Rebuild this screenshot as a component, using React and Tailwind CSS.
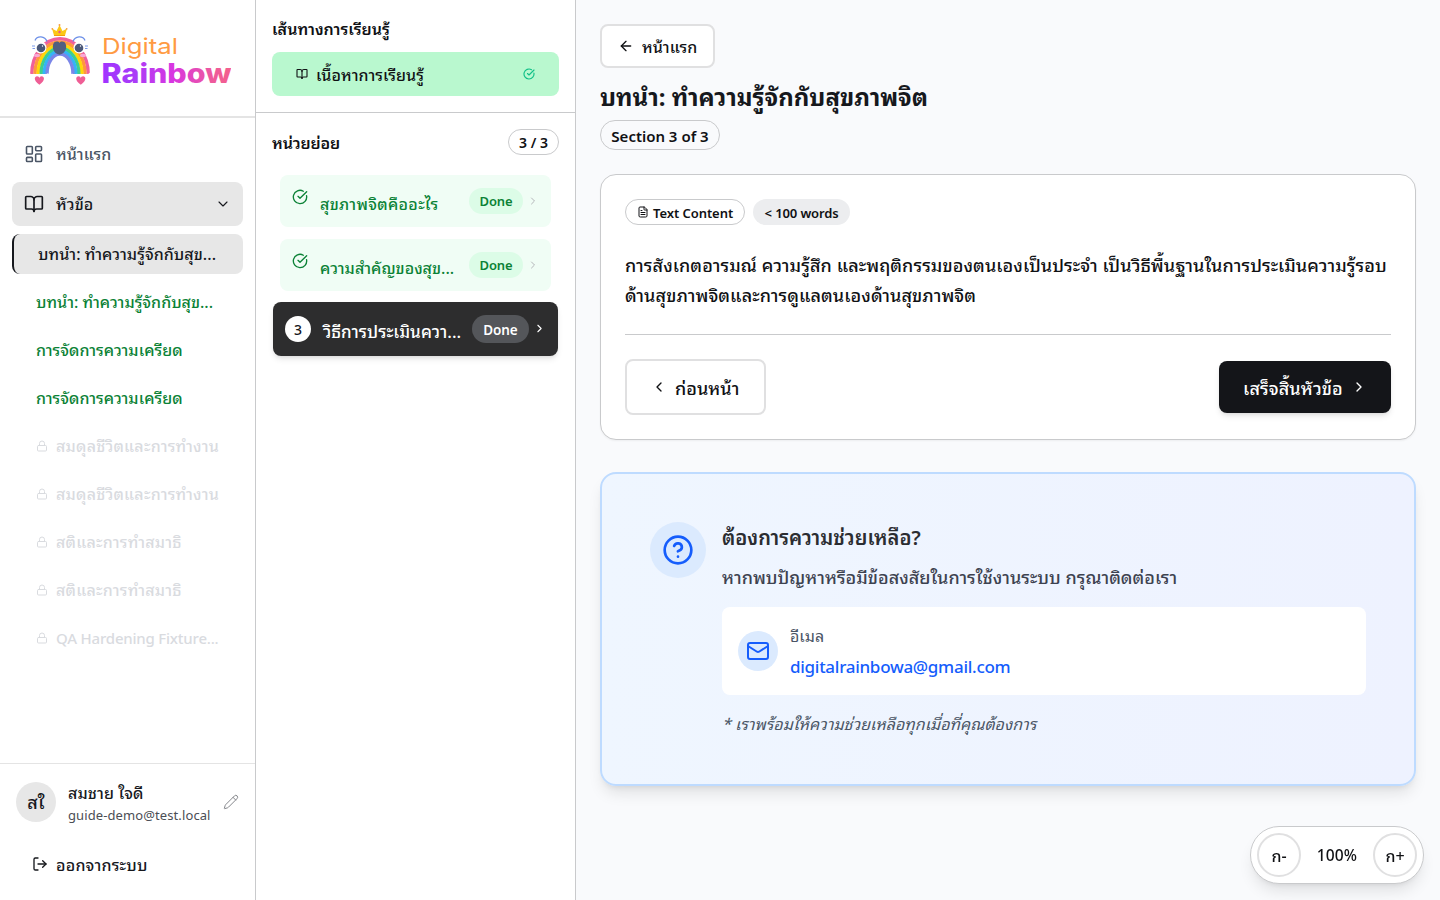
import React from 'react';
import {
  ArrowLeft, BookOpen, ChevronDown, ChevronLeft, ChevronRight, CircleCheckBig,
  CircleQuestionMark, FileText, LayoutDashboard, Lock, LogOut, Mail, Pencil,
} from 'lucide-react';

function Arc({ r, color }) {
  return (
    <path
      d={`M${60 - r} 74 A${r} ${r + 7} 0 0 1 ${60 + r} 74`}
      fill="none"
      stroke={color}
      strokeWidth="3.4"
    />
  );
}

function Heart({ x, y, s, color }) {
  return (
    <path
      transform={`translate(${x} ${y}) scale(${s})`}
      d="M0 4 C-7 -1 -5 -5 -2.5 -5 C-1 -5 0 -4 0 -3 C0 -4 1 -5 2.5 -5 C5 -5 7 -1 0 4Z"
      fill={color}
    />
  );
}

function Logo() {
  return (
    <svg width="231" height="116" viewBox="0 0 231 116" className="block">
      <defs>
        <linearGradient id="word" x1="0" x2="1">
          <stop offset="0" stopColor="#a033ff" />
          <stop offset="0.25" stopColor="#a93cf8" />
          <stop offset="0.55" stopColor="#d936e0" />
          <stop offset="0.85" stopColor="#ee5a9c" />
          <stop offset="1" stopColor="#f4608c" />
        </linearGradient>
      </defs>
      <Arc r={28.2} color="#f0609a" />
      <Arc r={25} color="#ff9640" />
      <Arc r={21.9} color="#ffd60a" />
      <Arc r={18.8} color="#3ecf8e" />
      <Arc r={15.8} color="#35b4f5" />
      <Arc r={13} color="#7a86e8" />
      <path d="M35 40.500 Q36.500 36.500 41 36.800 Q45.500 37.200 47 41.500 M85 40.500 Q83.500 36.500 79 36.800 Q74.500 37.200 73 41.500" fill="none" stroke="#6c8fe8" strokeWidth="1.300" />
      <circle cx="40.500" cy="47.500" r="6" fill="#fff" />
      <circle cx="79.500" cy="47.500" r="6" fill="#fff" />
      <circle cx="41" cy="48" r="4.300" fill="#4b5878" />
      <circle cx="79" cy="48" r="4.300" fill="#4b5878" />
      <circle cx="42.500" cy="46" r="0.700" fill="#fff" />
      <circle cx="80.500" cy="46" r="0.700" fill="#fff" />
      <path d="M32 46h3M32.500 48.500h2.500M85 46h3M85 48.500h2.500" stroke="#6c8fe8" strokeWidth="0.900" />
      <ellipse cx="37" cy="55.500" rx="3" ry="1.700" fill="#f9a8d4" />
      <ellipse cx="83" cy="55.500" rx="3" ry="1.700" fill="#f9a8d4" />
      <path d="M59.500 54.800 C53 53.500 52 47 53.300 44 C54.500 41 58.500 41 59.500 43 C60.500 41 64.500 41 65.700 44 C67 47 66 53.500 59.500 54.800Z" fill="#515f80" />
      <path d="M54 35.500 L52 28.500 L56.500 31 L59.500 25 L62.500 31 L67 28.500 L65 35.500Z" fill="#fbc716" />
      <path d="M54 35.500 H65" stroke="#f59e0b" strokeWidth="1" />
      <circle cx="59.500" cy="32" r="1.200" fill="#ec5a86" />
      <circle cx="59.500" cy="25" r="1" fill="#f59e42" />
      <circle cx="52.300" cy="28.800" r="0.900" fill="#f59e42" />
      <circle cx="66.700" cy="28.800" r="0.900" fill="#f59e42" />
      <path d="M29 74.500 q2 2 5 1 q3 2 6 0 q3 1.500 5 0 q3 0.500 4 -1.500 M71 74.500 q2 2.500 5 1 q3 2 6 0 q3 1.500 5 0 q3 0 4 -2" fill="none" stroke="#fff" strokeWidth="3" />
      <Heart x={39.400} y={81} s={0.95} color="#ef5e95" />
      <Heart x={80.800} y={81} s={0.95} color="#ef5e95" />
      <text x="102" y="54" fontSize="22" fontFamily="Inter, sans-serif" fontWeight="400" fill="#ff9a42" textLength="76" lengthAdjust="spacingAndGlyphs">Digital</text>
      <text x="101.500" y="83" fontSize="27" fontFamily="Inter, sans-serif" fontWeight="800" fill="url(#word)" textLength="130" lengthAdjust="spacingAndGlyphs">Rainbow</text>
    </svg>
  );
}

const doneTopics = ['บทนำ: ทำความรู้จักกับสุข...', 'การจัดการความเครียด', 'การจัดการความเครียด'];
const lockedTopics = [
  { title: 'สมดุลชีวิตและการทำงาน', style: 'tracking-[0.2px]' },
  { title: 'สมดุลชีวิตและการทำงาน', style: 'tracking-[0.2px]' },
  { title: 'สติและการทำสมาธิ', style: 'tracking-[0.2px]' },
  { title: 'สติและการทำสมาธิ', style: 'tracking-[0.2px]' },
  { title: 'QA Hardening Fixture...', style: 'text-[15px] tracking-[-0.2px]' },
];

function Sidebar() {
  return (
    <aside className="flex h-full w-64 shrink-0 flex-col border-r border-[#c9cacc] bg-white">
      <div className="h-[118px] border-b-2 border-[#e4e4e4]">
        <Logo />
      </div>
      <nav className="flex flex-1 flex-col px-3 pt-[14px]">
        <div className="flex h-11 items-center gap-3 px-3 text-[#4a5565]">
          <LayoutDashboard size={20} strokeWidth={1.9} />
          <span className="pb-[2px]">หน้าแรก</span>
        </div>
        <div className="mt-[6px] flex h-11 items-center gap-3 rounded-lg bg-[#e7e7e7] px-3 text-[#16181d]">
          <BookOpen size={20} strokeWidth={2} />
          <span className="flex-1 pb-[2px] tracking-[0.1px]">หัวข้อ</span>
          <ChevronDown size={16} strokeWidth={1.7} />
        </div>
        <div className="mt-2 flex flex-col gap-2">
          <div className="flex h-10 items-center rounded-lg border-l-2 border-[#16181d] bg-[#e7e7e7] pb-[2px] pl-6 tracking-[0.05px] whitespace-nowrap text-[#16181d]">
            บทนำ: ทำความรู้จักกับสุข...
          </div>
          {doneTopics.map((t, i) => (
            <div key={i} className="flex h-10 items-center pb-[2px] pl-6 whitespace-nowrap text-[#0b8236]">{t}</div>
          ))}
          {lockedTopics.map((t, i) => (
            <div key={i} className="flex h-10 items-center gap-2 pl-6 whitespace-nowrap text-[#d9dbdf]">
              <Lock size={12} className="mb-px" />
              <span className={`pb-[2px] ${t.style}`}>{t.title}</span>
            </div>
          ))}
        </div>
      </nav>
      <div className="h-[137px] border-t border-[#e4e4e4] pt-[18px] text-[#16181d]">
        <div className="flex h-10 items-center pl-4">
          <div className="flex size-10 items-center justify-center rounded-full bg-[#e7e7e7] pb-[2px] text-lg">สใ</div>
          <div className="ml-3 w-[155px]">
            <div className="h-6 leading-6 tracking-[0.1px]">สมชาย ใจดี</div>
            <div className="h-5 pt-px text-[13px] leading-5 font-normal tracking-[0.1px] text-[#4b4e55]">guide-demo@test.local</div>
          </div>
          <Pencil size={16} strokeWidth={1.500} className="text-[#85878c]" />
        </div>
        <div className="mt-[22px] flex h-10 items-center gap-2 pl-8">
          <LogOut size={16} />
          <span className="tracking-[0.2px]">ออกจากระบบ</span>
        </div>
      </div>
    </aside>
  );
}

function Lesson({ title, style }) {
  return (
    <div className="mx-2 flex h-[52px] rounded-lg bg-[#f0fdf5] pl-3 text-[#0b8236]">
      <CircleCheckBig size={16} className="mt-[14px]" />
      <span className={`mt-4 ml-3 h-6 w-[141px] leading-6 whitespace-nowrap ${style}`}>{title}</span>
      <span className="mt-[13px] ml-2 flex h-[26px] w-[54px] items-center justify-center rounded-full bg-[#dcfce7] text-[13px] font-semibold tracking-[-0.1px]">Done</span>
      <ChevronRight size={12} className="mt-5 ml-1 text-[#b4b6ba]" />
    </div>
  );
}

function UnitPanel() {
  return (
    <section className="h-full w-80 shrink-0 border-r border-[#c9cacc] bg-white text-[#101114]">
      <div className="h-[113px] border-b border-[#c9cacc] px-4 pt-4">
        <h2 className="h-6 leading-6 font-semibold">เส้นทางการเรียนรู้</h2>
        <div className="mt-3 flex h-11 items-center rounded-lg bg-[#b9f8cf] px-6">
          <BookOpen size={12} strokeWidth={2.2} />
          <span className="ml-2 flex-1 tracking-[0.05px]">เนื้อหาการเรียนรู้</span>
          <CircleCheckBig size={12} strokeWidth={2.3} className="text-[#12c088]" />
        </div>
      </div>
      <div className="px-4 pt-4">
        <div className="flex h-[26px] items-center justify-between">
          <h3 className="font-semibold tracking-[-0.15px]">หน่วยย่อย</h3>
          <span className="flex h-[26px] w-[51px] items-center justify-center rounded-full border border-[#c9cacc] text-sm font-semibold">3 / 3</span>
        </div>
        <div className="mt-5 flex flex-col gap-3">
          <Lesson title="สุขภาพจิตคืออะไร" style="tracking-[0.3px]" />
          <Lesson title="ความสำคัญของสุข..." style="tracking-normal" />
        </div>
        <div className="mx-[1px] mt-[11px] flex h-[54px] rounded-lg bg-[#2d2d2e] pl-3 text-white shadow-md">
          <span className="mt-[14px] flex size-[26px] items-center justify-center rounded-full bg-white text-sm text-[#16181d]">3</span>
          <span className="mt-[17px] ml-3 h-6 w-[141px] text-[17px] leading-6 tracking-[0.05px] whitespace-nowrap">วิธีการประเมินควา...</span>
          <span className="mt-[13px] ml-2 flex h-7 w-[57px] items-center justify-center rounded-full bg-[#54565a] text-[13.500px] font-semibold tracking-[-0.1px]">Done</span>
          <ChevronRight size={13} className="mt-[20px] ml-1" />
        </div>
      </div>
    </section>
  );
}

function LessonCard() {
  return (
    <article className="mt-6 h-[266px] rounded-2xl border border-[#c9cacc] bg-white px-6 pt-6 shadow-xs">
      <div className="flex h-[26px] gap-2 text-[13px] font-semibold">
        <span className="flex w-[120px] items-center justify-center gap-1 rounded-full border border-[#c9cacc] whitespace-nowrap">
          <FileText size={12} />
          <span className="pt-px tracking-[-0.05px]">Text Content</span>
        </span>
        <span className="flex w-[97px] items-center justify-center rounded-full bg-[#ecedef] pt-px tracking-[-0.15px] whitespace-nowrap">&lt; 100 words</span>
      </div>
      <div className="mt-6 h-[62px] text-lg leading-[30px] tracking-[0.075px] whitespace-nowrap">
        <p>การสังเกตอารมณ์ ความรู้สึก และพฤติกรรมของตนเองเป็นประจำ เป็นวิธีพื้นฐานในการประเมินความรู้รอบ</p>
        <p>ด้านสุขภาพจิตและการดูแลตนเองด้านสุขภาพจิต</p>
      </div>
      <div className="mt-[23px] flex items-center justify-between border-t border-[#c9cacc] pt-6 text-lg">
        <button className="flex h-14 w-[141px] items-center rounded-lg border-2 border-[#e0e0e1] bg-white pl-6">
          <ChevronLeft size={16} />
          <span className="ml-2">ก่อนหน้า</span>
        </button>
        <button className="flex h-[52px] w-[172px] items-center rounded-lg bg-[#141519] pl-6 text-white shadow-md">
          <span className="w-[100px] tracking-[0.1px] whitespace-nowrap">เสร็จสิ้นหัวข้อ</span>
          <ChevronRight size={16} className="ml-2" />
        </button>
      </div>
    </article>
  );
}

function HelpCard() {
  return (
    <section className="mt-8 flex h-[314px] rounded-2xl border-2 border-[#bedbff] bg-linear-to-r from-[#eff6ff] to-[#eef2ff] px-12 pt-12 shadow-lg">
      <div className="flex size-14 shrink-0 items-center justify-center rounded-full bg-[#dbeafe] text-[#155dfc]">
        <CircleQuestionMark size={32} />
      </div>
      <div className="ml-4 flex-1">
        <h2 className="h-8 text-xl leading-7 font-semibold text-[#2b2d31]">ต้องการความช่วยเหลือ?</h2>
        <p className="mt-[7px] h-[31px] text-lg leading-[30px] text-[#3d4250]">หากพบปัญหาหรือมีข้อสงสัยในการใช้งานระบบ กรุณาติดต่อเรา</p>
        <div className="mt-[15px] flex h-[88px] items-center rounded-lg bg-white pl-4">
          <div className="flex size-10 items-center justify-center rounded-full bg-[#dbeafe] text-[#155dfc]">
            <Mail size={24} />
          </div>
          <div className="ml-3">
            <div className="h-7 leading-7 font-normal text-[#4a5565]">อีเมล</div>
            <div className="h-8 pt-px text-[17px] leading-8 tracking-[-0.27px] text-[#155dfc]">digitalrainbowa@gmail.com</div>
          </div>
        </div>
        <p className="mt-4 h-6 leading-6 font-normal tracking-[0.02px] text-[#4a5565] italic">* เราพร้อมให้ความช่วยเหลือทุกเมื่อที่คุณต้องการ</p>
      </div>
    </section>
  );
}

export default function App() {
  return (
    <div className="flex h-screen w-full overflow-hidden bg-[#f9fafc] font-['Noto_Sans_Thai_Looped','Noto_Looped_Thai','Sarabun','Noto_Sans','Noto_Sans_Thai',sans-serif] text-base font-medium text-[#101114]">
      <Sidebar />
      <UnitPanel />
      <main className="h-full flex-1 px-6 pt-6">
        <button className="flex h-11 w-[115px] items-center rounded-lg border-2 border-[#e0e0e1] bg-white pl-4">
          <ArrowLeft size={16} />
          <span className="ml-2">หน้าแรก</span>
        </button>
        <h1 className="mt-[11px] h-[35px] text-2xl leading-8 font-bold text-[#16181d]">บทนำ: ทำความรู้จักกับสุขภาพจิต</h1>
        <span className="mt-[6px] flex h-[30px] w-[120px] items-center justify-center rounded-full border border-[#c9cacc] text-[15px] font-semibold whitespace-nowrap">Section 3 of 3</span>
        <LessonCard />
        <HelpCard />
      </main>
      <div className="fixed right-4 bottom-4 flex h-[58px] w-[174px] items-center justify-between rounded-full border border-[#c9cacc] bg-white px-[6px] shadow-lg">
        <button className="size-11 rounded-full border-2 border-[#e0e0e1]">ก-</button>
        <span className="text-[15.500px] tracking-[0.1px]">100%</span>
        <button className="size-11 rounded-full border-2 border-[#e0e0e1]">ก+</button>
      </div>
    </div>
  );
}
